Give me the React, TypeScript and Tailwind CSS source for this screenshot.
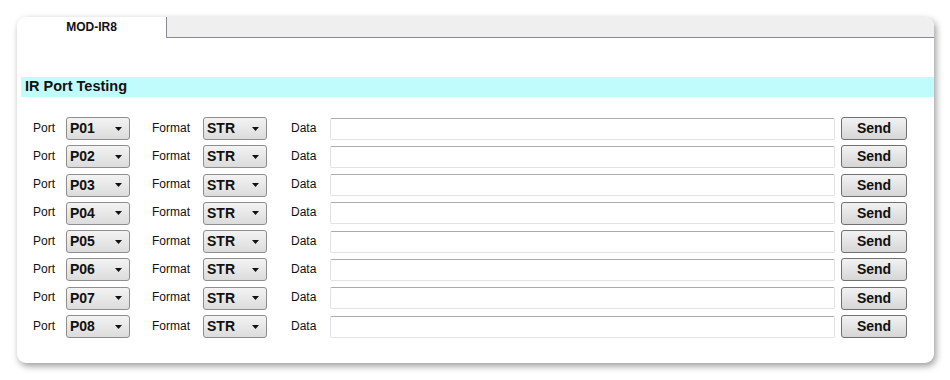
const ports = ["P01", "P02", "P03", "P04", "P05", "P06", "P07", "P08"];

function Caret() {
  return (
    <svg width="7" height="4" viewBox="0 0 7 4" className="ml-auto">
      <path d="M0 0 L7 0 L3.5 4 Z" fill="#111" />
    </svg>
  );
}

function FakeSelect({ value, width }: { value: string; width: string }) {
  return (
    <div
      className={`flex h-[23px] ${width} items-center rounded-[3px] border border-[#8e8e8e] bg-gradient-to-b from-[#f3f3f3] to-[#dcdcdc] pl-[3px] pr-[7px] text-[14px] font-bold text-[#111]`}
    >
      <span>{value}</span>
      <Caret />
    </div>
  );
}

function PortRow({ port }: { port: string }) {
  return (
    <div className="flex h-[23px] items-center">
      <span className="ml-[16px] w-[33px] pb-[2px] text-[12px] text-[#111]">Port</span>
      <FakeSelect value={port} width="w-[64px]" />
      <span className="ml-[22px] w-[51px] pb-[2px] text-[12px] text-[#111]">Format</span>
      <FakeSelect value="STR" width="w-[64px]" />
      <span className="ml-[24px] w-[39px] pb-[2px] text-[12px] text-[#111]">Data</span>
      <div className="h-[22px] w-[505px] rounded-[2px] border border-[#e2e3ea] border-t-[#ababab]" />
      <button className="ml-[6px] h-[23px] w-[66px] rounded-[3px] border border-[#707070] bg-gradient-to-b from-[#f2f2f2] to-[#d6d6d6] text-[14px] font-bold text-[#111]">
        Send
      </button>
    </div>
  );
}

export default function App() {
  return (
    <div
      className="h-[380px] w-[950px] bg-white pl-[17px] pt-[17px]"
      style={{ fontFamily: '"Liberation Sans", Arial, sans-serif' }}
    >
      <div className="flex h-[346px] w-[917px] flex-col overflow-hidden rounded-[9px] bg-white shadow-[2px_3px_7px_rgba(0,0,0,0.4)]">
        {/* Tab strip */}
        <div className="flex h-[21px]">
          <div className="flex w-[149px] items-center justify-center pb-[2px] text-[12px] font-bold text-[#111]">
            MOD-IR8
          </div>
          <div className="flex-1 rounded-tr-[9px] border-b border-l border-[#8a8a94] bg-[#efefef]" />
        </div>

        <div className="h-[39px]" />

        {/* Section heading */}
        <div className="ml-[4px] flex h-[20px] items-center bg-[#c0fcfc] pl-[4px] text-[14.5px] font-bold text-[#111]">
          IR Port Testing
        </div>

        <div className="mt-[20px] flex flex-col gap-[5.3px]">
          {ports.map((p) => (
            <PortRow key={p} port={p} />
          ))}
        </div>
      </div>
    </div>
  );
}
